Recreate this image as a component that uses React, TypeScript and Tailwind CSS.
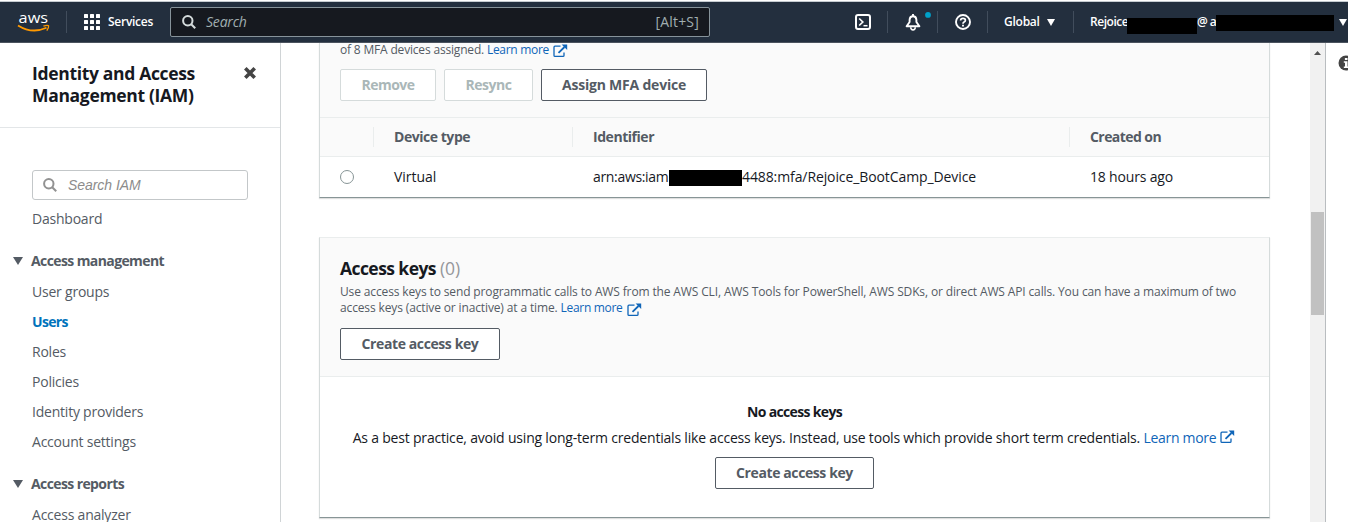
import type { ReactNode } from "react";

function ExternalIcon({ className = "" }: { className?: string }) {
  return (
    <svg viewBox="0 0 16 14" className={`h-3.5 w-4 shrink-0 ${className}`} fill="none" stroke="#0f65b8" strokeWidth="1.3">
      <path d="M7.5 2.2H2Q1 2.2 1 3.2V11.4Q1 12.4 2 12.4H10Q11 12.4 11 11.4V8.5" />
      <path d="M5.5 8.8L11.5 3" strokeWidth="1.8" />
      <path d="M8.6.4H14.2V6Z" fill="#0f65b8" stroke="none" />
    </svg>
  );
}

function SearchIcon({ className }: { className: string }) {
  return (
    <svg viewBox="0 0 14 14" className={className} fill="none" stroke="currentColor" strokeWidth="2">
      <circle cx="5.8" cy="5.8" r="4.7" />
      <path d="M9.2 9.2L13.2 13.2" />
    </svg>
  );
}

function Caret({ className }: { className: string }) {
  return (
    <svg viewBox="0 0 10 8" preserveAspectRatio="none" className={className} fill="currentColor">
      <path d="M0 0H10L5 8Z" />
    </svg>
  );
}

function Divider() {
  return <div className="h-[22px] w-px shrink-0 bg-[#414d5c]" />;
}

function AwsLogo() {
  return (
    <svg viewBox="0 0 34 24" className="ml-[17px] h-6 w-[34px] shrink-0">
      <text x="1.6" y="13" fill="#fff" fontSize="15" fontWeight="500" textLength="29.5" lengthAdjust="spacingAndGlyphs" fontFamily="Open Sans, sans-serif">aws</text>
      <path d="M1 15.4Q15 24.2 29.5 17.8" fill="none" stroke="#f90" strokeWidth="1.8" />
      <path d="M26.4 16.1Q30.5 14.8 31.6 15.8Q32 17.5 29.8 20.6" fill="none" stroke="#f90" strokeWidth="1.3" />
    </svg>
  );
}

function TopBar() {
  return (
    <header className="flex h-[42px] shrink-0 items-center overflow-hidden border-t border-b border-t-[#c5cbd0] border-b-[#4b535e] bg-[#232f3e] text-xs font-semibold text-white">
      <AwsLogo />
      <div className="ml-[15px]"><Divider /></div>
      <svg viewBox="0 0 16 16" className="ml-[17px] h-4 w-4 shrink-0" fill="#fff">
        {[0, 6, 12].map((y) => [0, 6, 12].map((x) => <rect key={`${x}-${y}`} x={x} y={y} width="4" height="4" rx=".5" />))}
      </svg>
      <span className="ml-2 w-[62px] shrink-0 tracking-[-0.27px]">Services</span>
      <div className="flex h-[30px] w-[540px] shrink-0 items-center rounded-xs border border-[#87939a] bg-[#16191f] text-sm font-normal text-[#a0aeb0]">
        <SearchIcon className="ml-[11px] h-3.5 w-3.5 text-[#d5dbdb]" />
        <span className="ml-2.5 tracking-[-0.2px] italic">Search</span>
        <span className="mr-2.5 ml-auto tracking-[0.2px]">[Alt+S]</span>
      </div>
      <svg viewBox="0 0 16 16" className="ml-[145px] h-4 w-4 shrink-0" fill="none" stroke="#fff" strokeWidth="2">
        <rect x="1" y="1" width="14" height="14" rx="2" />
        <path d="M4.2 4.5L7.8 8L4.2 11.5" strokeWidth="1.7" />
        <path d="M8.5 11.7H12.5" strokeWidth="1.5" />
      </svg>
      <div className="ml-4"><Divider /></div>
      <svg viewBox="0 0 28 20" className="ml-[17px] h-5 w-7 shrink-0" fill="none" stroke="#fff" strokeWidth="1.9">
        <path d="M1.6 14.2H14.4L11.4 10V7.7Q11.2 4.2 8 4.2Q4.8 4.2 4.6 7.7V10Z" strokeLinejoin="round" />
        <path d="M8 2V4.2" />
        <path d="M5.7 15.2Q5.9 17.9 8 17.9Q10.1 17.9 10.3 15.2" strokeWidth="1.6" />
        <circle cx="23" cy="2.9" r="2.9" fill="#00a1c9" stroke="none" />
      </svg>
      <div className="ml-1"><Divider /></div>
      <svg viewBox="0 0 16 16" className="ml-[17px] h-4 w-4 shrink-0" fill="none" stroke="#fff" strokeWidth="1.9">
        <circle cx="8" cy="8" r="7" />
        <path d="M5.6 6.6Q5.6 4.4 8 4.4Q10.4 4.4 10.4 6.3Q10.4 7.4 9.1 8.1Q8 8.7 8 9.8" strokeWidth="1.7" />
        <path d="M8 10.8V12.5" />
      </svg>
      <div className="ml-4"><Divider /></div>
      <span className="ml-4 w-[43px] shrink-0 tracking-[-0.25px]">Global</span>
      <Caret className="h-[7px] w-2 shrink-0" />
      <div className="ml-[18px]"><Divider /></div>
      <div className="ml-4 flex shrink-0 items-center">
        <span className="w-[37px] tracking-[-0.45px]">Rejoice</span>
        <span className="mt-2 h-4 w-[70px] bg-black" />
        <span className="w-[19px] tracking-[-0.6px] whitespace-nowrap">@ a</span>
        <span className="mt-0.5 h-4 w-[118px] bg-black" />
        <Caret className="ml-[5px] h-[7px] w-2" />
      </div>
    </header>
  );
}

function NavItem({ children, active = false }: { children: ReactNode; active?: boolean }) {
  return (
    <a className={`flex h-[30px] items-center pl-8 ${active ? "font-bold tracking-[-0.65px] text-[#0073bb]" : "tracking-[-0.22px] text-[#545b64]"}`}>{children}</a>
  );
}

function NavGroup({ children }: { children: ReactNode }) {
  return (
    <div className="flex h-8 items-center pl-[13px] font-bold tracking-[-0.6px] text-[#545b64]">
      <Caret className="mr-2 h-2 w-2.5" />
      {children}
    </div>
  );
}

function Sidebar() {
  return (
    <aside className="flex w-[281px] shrink-0 flex-col overflow-hidden border-r border-[#d0d4d6]">
      <div className="flex h-[85px] shrink-0 justify-between border-b border-[#e3e6e8] pt-[19px] pr-[24px] pl-8">
        <h2 className="text-[17.5px] leading-[22px] font-bold tracking-[-0.33px] text-[#16191f]">Identity and Access<br />Management (IAM)</h2>
        <svg viewBox="0 0 12 12" className="mt-[5px] h-3 w-3" stroke="#444" strokeWidth="3.6">
          <path d="M1.3 1.3L10.7 10.7M10.7 1.3L1.3 10.7" />
        </svg>
      </div>
      <div className="mt-[42px] ml-8 flex h-[30px] w-[216px] shrink-0 items-center rounded-[3px] border border-[#c3c7c9] font-['Liberation_Sans',sans-serif] text-[#8c8c8c] italic">
        <SearchIcon className="mr-[11px] ml-2.5 h-3.5 w-3.5 text-[#929292]" />
        <span className="tracking-[-0.05px]">Search IAM</span>
      </div>
      <nav className="mt-1 shrink-0">
        <NavItem>Dashboard</NavItem>
        <div className="mt-[11px]"><NavGroup>Access management</NavGroup></div>
        <NavItem>User groups</NavItem>
        <NavItem active>Users</NavItem>
        <NavItem>Roles</NavItem>
        <NavItem>Policies</NavItem>
        <NavItem>Identity providers</NavItem>
        <NavItem>Account settings</NavItem>
        <div className="mt-[11px]"><NavGroup>Access reports</NavGroup></div>
        <NavItem>Access analyzer</NavItem>
      </nav>
    </aside>
  );
}

function Button({ children, className, disabled = false }: { children: ReactNode; className: string; disabled?: boolean }) {
  return (
    <button disabled={disabled} className={`flex h-8 items-center justify-center rounded-xs border bg-white font-bold ${disabled ? "border-[#d5dbdb] text-[#aab7b8]" : "border-[#545b64] text-[#545b64]"} ${className}`}>{children}</button>
  );
}

function MfaPanel() {
  return (
    <section className="h-[155px] border border-t-0 border-[#d5dbdb] border-b-[#879596] shadow-[0_1px_1px_#00000020]">
      <div className="h-[75px] border-b border-[#eaeded] bg-[#fafafa] px-5">
        <p className="flex h-[26px] items-start text-xs leading-4 tracking-[-0.18px] whitespace-pre text-[#545b64]">
          <span className="-mt-px">of 8 MFA devices assigned. <a className="tracking-[-0.3px] text-[#0f65b8]">Learn more</a></span>
          <ExternalIcon className="mt-px ml-1" />
        </p>
        <div className="flex gap-2">
          <Button disabled className="w-24 tracking-[-0.5px]">Remove</Button>
          <Button disabled className="w-[89px] tracking-[-0.5px]">Resync</Button>
          <Button className="w-[166px] tracking-[-0.21px]">Assign MFA device</Button>
        </div>
      </div>
      <div className="grid h-[39px] grid-cols-[53px_199px_497px_200px] items-center border-b border-[#eaeded] bg-[#fafafa] font-bold text-[#545b64]">
        <div />
        <div className="border-l border-[#eaeded] pl-5 leading-5 tracking-[-0.46px]">Device type</div>
        <div className="border-l border-[#eaeded] pl-5 leading-5 tracking-[-0.46px]">Identifier</div>
        <div className="border-l border-[#eaeded] pl-5 leading-5 tracking-[-0.57px]">Created on</div>
      </div>
      <div className="grid h-10 grid-cols-[53px_199px_497px_200px] items-center text-[#16191f]">
        <div className="ml-5 h-3.5 w-3.5 rounded-full border border-[#879596]" />
        <div className="pl-[21px] tracking-[-0.05px]">Virtual</div>
        <div className="flex items-center pl-[21px]">
          <span className="w-[76px] tracking-[-0.33px]">arn:aws:iam</span>
          <span className="mt-0.5 h-4 w-[73px] bg-black" />
          <span className="tracking-[-0.1px]">4488:mfa/Rejoice_BootCamp_Device</span>
        </div>
        <div className="pl-[21px] tracking-[-0.18px]">18 hours ago</div>
      </div>
    </section>
  );
}

function KeysPanel() {
  return (
    <section className="mt-[39px] h-[281px] shrink-0 border border-[#d5dbdb] border-t-[#eaeded] border-b-[#879596] shadow-[0_1px_1px_#00000020]">
      <div className="h-[139px] border-b border-[#eaeded] bg-[#fafafa] px-5 pt-[19px]">
        <h2 className="text-[17.5px] leading-[22px] font-bold tracking-[-0.57px] text-[#16191f]">
          Access keys <span className="font-normal tracking-normal text-[#95979b]">(0)</span>
        </h2>
        <div className="mt-[5px] h-11 text-xs leading-4 tracking-[-0.135px] whitespace-nowrap text-[#545b64]">
          <p>Use access keys to send programmatic calls to AWS from the AWS CLI, AWS Tools for PowerShell, AWS SDKs, or direct AWS API calls. You can have a maximum of two</p>
          <p className="flex whitespace-pre">access keys (active or inactive) at a time. <a className="tracking-[-0.3px] text-[#0f65b8]">Learn more</a><ExternalIcon className="mt-[3px] ml-1" /></p>
        </div>
        <Button className="w-40 tracking-[-0.4px]">Create access key</Button>
      </div>
      <div className="flex flex-col items-center pt-[25px] text-[#16191f]">
        <h3 className="leading-5 font-bold tracking-[-0.66px]">No access keys</h3>
        <p className="mt-1.5 mb-[9px] flex leading-5 tracking-[-0.195px] whitespace-pre">As a best practice, avoid using long-term credentials like access keys. Instead, use tools which provide short term credentials. <a className="tracking-[-0.3px] text-[#0f65b8]">Learn more</a><ExternalIcon className="mt-0.5 ml-1" /></p>
        <Button className="w-[159px] tracking-[-0.4px]">Create access key</Button>
      </div>
    </section>
  );
}

export default function App() {
  return (
    <div className="flex h-[522px] w-[1348px] flex-col overflow-hidden bg-white pt-px font-['Open_Sans',sans-serif] text-sm">
      <TopBar />
      <div className="flex min-h-0 flex-1">
        <Sidebar />
        <main className="flex-1 overflow-hidden pr-10 pl-[38px]">
          <MfaPanel />
          <KeysPanel />
        </main>
        <div className="flex w-4 shrink-0 flex-col items-center border-r border-[#b9bdc0] bg-[#f1f1f1]">
          <svg viewBox="0 0 7 4" className="mt-2 h-1 w-[7px]" fill="#505050"><path d="M0 4L3.5 0L7 4Z" /></svg>
          <div className="mt-[157px] h-[103px] w-[13px] bg-[#c1c1c1]" />
        </div>
        <div className="w-[22px] shrink-0 overflow-hidden">
          <svg viewBox="0 0 16 16" className="mt-3 ml-3 h-4 w-4">
            <circle cx="8" cy="8" r="7.5" fill="#444" />
            <path d="M6.9 3H9.5V5H6.9ZM5.8 6.3H9.5V11.5H10.6V13H5.8V11.5H7V7.7H5.8Z" fill="#fff" />
          </svg>
        </div>
      </div>
    </div>
  );
}
